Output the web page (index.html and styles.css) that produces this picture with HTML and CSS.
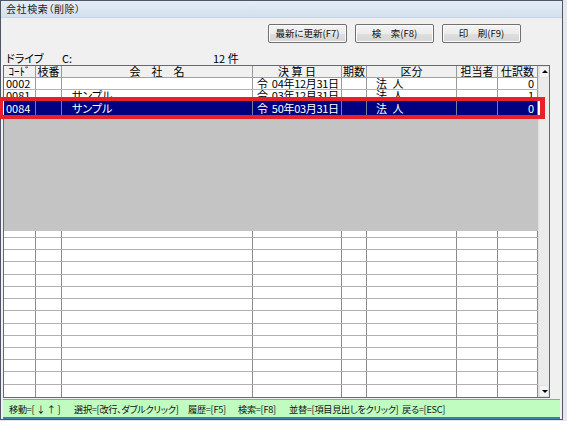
FILE: index.html
```html
<!DOCTYPE html>
<html lang="ja">
<head>
<meta charset="utf-8">
<title>会社検索（削除）</title>
<link rel="stylesheet" href="styles.css">
</head>
<body>
<div class="window">
  <div class="titlebar">会社検索（削除）</div>
  <div class="content">
    <div class="toolbar">
      <button class="btn">最新に更新(F7)</button>
      <button class="btn">検　索(F8)</button>
      <button class="btn">印　刷(F9)</button>
    </div>
    <div class="info">
      <span class="info-label">ドライブ</span>
      <span class="info-drive">C:</span>
      <span class="info-count">12 件</span>
    </div>
    <div class="table">
      <div class="grid">
        <div class="row head">
          <div class="c ctr">ｺｰﾄﾞ</div>
          <div class="c ctr">枝番</div>
          <div class="c ctr">会　社　名</div>
          <div class="c ctr">決 算 日</div>
          <div class="c ctr">期数</div>
          <div class="c ctr">区分</div>
          <div class="c ctr">担当者</div>
          <div class="c ctr">仕訳数</div>
        </div>
        <div class="row data">
          <div class="c code">0002</div>
          <div class="c"></div>
          <div class="c name"></div>
          <div class="c date">令 04年12月31日</div>
          <div class="c"></div>
          <div class="c kind">法 人</div>
          <div class="c"></div>
          <div class="c num">0</div>
        </div>
        <div class="row data">
          <div class="c code">0081</div>
          <div class="c"></div>
          <div class="c name">サンプル</div>
          <div class="c date">令 03年12月31日</div>
          <div class="c"></div>
          <div class="c kind">法 人</div>
          <div class="c"></div>
          <div class="c num">1</div>
        </div>
        <div class="filler"></div>
        <div class="row empty short"><div class="c"></div><div class="c"></div><div class="c"></div><div class="c"></div><div class="c"></div><div class="c"></div><div class="c"></div><div class="c"></div></div>
        <div class="row empty"><div class="c"></div><div class="c"></div><div class="c"></div><div class="c"></div><div class="c"></div><div class="c"></div><div class="c"></div><div class="c"></div></div>
        <div class="row empty"><div class="c"></div><div class="c"></div><div class="c"></div><div class="c"></div><div class="c"></div><div class="c"></div><div class="c"></div><div class="c"></div></div>
        <div class="row empty"><div class="c"></div><div class="c"></div><div class="c"></div><div class="c"></div><div class="c"></div><div class="c"></div><div class="c"></div><div class="c"></div></div>
        <div class="row empty"><div class="c"></div><div class="c"></div><div class="c"></div><div class="c"></div><div class="c"></div><div class="c"></div><div class="c"></div><div class="c"></div></div>
        <div class="row empty"><div class="c"></div><div class="c"></div><div class="c"></div><div class="c"></div><div class="c"></div><div class="c"></div><div class="c"></div><div class="c"></div></div>
        <div class="row empty"><div class="c"></div><div class="c"></div><div class="c"></div><div class="c"></div><div class="c"></div><div class="c"></div><div class="c"></div><div class="c"></div></div>
        <div class="row empty"><div class="c"></div><div class="c"></div><div class="c"></div><div class="c"></div><div class="c"></div><div class="c"></div><div class="c"></div><div class="c"></div></div>
        <div class="row empty"><div class="c"></div><div class="c"></div><div class="c"></div><div class="c"></div><div class="c"></div><div class="c"></div><div class="c"></div><div class="c"></div></div>
        <div class="row empty"><div class="c"></div><div class="c"></div><div class="c"></div><div class="c"></div><div class="c"></div><div class="c"></div><div class="c"></div><div class="c"></div></div>
        <div class="row empty"><div class="c"></div><div class="c"></div><div class="c"></div><div class="c"></div><div class="c"></div><div class="c"></div><div class="c"></div><div class="c"></div></div>
        <div class="row empty"><div class="c"></div><div class="c"></div><div class="c"></div><div class="c"></div><div class="c"></div><div class="c"></div><div class="c"></div><div class="c"></div></div>
        <div class="row empty"><div class="c"></div><div class="c"></div><div class="c"></div><div class="c"></div><div class="c"></div><div class="c"></div><div class="c"></div><div class="c"></div></div>
        <div class="row empty last"><div class="c"></div><div class="c"></div><div class="c"></div><div class="c"></div><div class="c"></div><div class="c"></div><div class="c"></div><div class="c"></div></div>
      </div>
      <div class="scrollbar">
        <div class="sb-btn up"></div>
        <div class="sb-track"></div>
        <div class="sb-btn down"></div>
      </div>
    </div>
    <div class="status">
      <span class="st st1">移動=[ ↓ ↑ ]</span>
      <span class="st st2">選択=[改行、ダブルクリック]</span>
      <span class="st st3">履歴=[F5]</span>
      <span class="st st4">検索=[F8]</span>
      <span class="st st5">並替=[項目見出しをクリック]</span>
      <span class="st">戻る=[ESC]</span>
    </div>
  </div>
  <div class="selected-overlay">
    <div class="row sel">
      <div class="c code">0084</div>
      <div class="c"></div>
      <div class="c name">サンプル</div>
      <div class="c date">令 50年03月31日</div>
      <div class="c"></div>
      <div class="c kind">法 人</div>
      <div class="c"></div>
      <div class="c num">0</div>
    </div>
  </div>
</div>
</body>
</html>
```
FILE: styles.css
```css
* { box-sizing: border-box; }
html, body { margin: 0; padding: 0; }
body {
  width: 567px;
  height: 421px;
  overflow: hidden;
  background: #e4e8ec;
  font-family: "Noto Sans CJK JP", sans-serif;
  font-feature-settings: "palt";
  color: #000;
}
.window {
  position: relative;
  width: 563px;
  height: 420px;
  border: 1px solid #4d5864;
  background: #f0f0f0;
  display: flex;
  flex-direction: column;
}
.titlebar {
  height: 17px;
  flex-shrink: 0;
  background: linear-gradient(#e4ecf7, #d4e0ee);
  border-bottom: 1px solid #c7d3e0;
  font-size: 10px;
  letter-spacing: 0.6px;
  line-height: 16px;
  padding-left: 5px;
  color: #1b1b1b;
  white-space: nowrap;
}
.content {
  flex: 1;
  display: flex;
  flex-direction: column;
  padding: 0 2px;
}
.toolbar {
  margin-top: 6px;
  display: flex;
  justify-content: flex-end;
  gap: 8px;
  padding-right: 39px;
}
.btn {
  width: 79px;
  height: 19px;
  padding: 0;
  border: 1px solid #707070;
  border-radius: 2px;
  background: linear-gradient(#f4f4f4 0%, #ececec 50%, #dedede 51%, #d6d6d6 100%);
  box-shadow: inset 0 0 0 1px #fcfcfc;
  font-family: "Noto Sans CJK JP", sans-serif;
  font-feature-settings: "palt";
  font-size: 9.5px;
  line-height: 17px;
  color: #111;
  white-space: nowrap;
}
.info {
  margin-top: 8px;
  height: 14px;
  display: flex;
  font-size: 11px;
  line-height: 14px;
  padding-left: 3px;
  white-space: nowrap;
}
.info-label { width: 56px; }
.info-drive { width: 151px; }
.table {
  width: 547px;
  height: 333px;
  border: 1px solid #646a70;
  display: flex;
  background: #ffffff;
}
.grid {
  width: 534px;
  display: flex;
  flex-direction: column;
  overflow: hidden;
}
.row {
  display: grid;
  grid-template-columns: 32px 26px 191px 89px 25px 90px 41px 40px;
  flex-shrink: 0;
  font-size: 11px;
  line-height: 11px;
  white-space: nowrap;
}
.c {
  border-right: 1px solid #9a9a9a;
  overflow: hidden;
  display: flex;
  align-items: center;
}
.ctr { justify-content: center; }
.code { padding-left: 2px; }
.name { padding-left: 10px; }
.date { padding-left: 4px; letter-spacing: -0.3px; word-spacing: 2px; }
.kind { padding-left: 9px; word-spacing: 3px; }
.num { justify-content: flex-end; padding-right: 3px; }
.head {
  height: 12px;
  background: #f0f0f0;
  border-bottom: 1px solid #a0a0a0;
}
.data {
  height: 12px;
  background: #fff;
  border-bottom: 1px solid #b4b4b4;
}
.filler {
  height: 129px;
  flex-shrink: 0;
  background: #c4c4c4;
}
.empty {
  height: 12.23px;
  background: #fff;
  border-bottom: 1px solid #b0b0b0;
}
.empty .c { border-right-color: #8c8c8c; }
.empty.short { height: 7px; }
.empty.last { border-bottom: none; }
.scrollbar {
  width: 11px;
  display: flex;
  flex-direction: column;
  background: #ebebeb;
  border-left: 1px solid #e0e0e0;
}
.sb-track { flex: 1; }
.sb-btn {
  height: 12px;
  position: relative;
  background: #f4f4f4;
  border: 1px solid #e2e2e2;
}
.sb-btn::after {
  content: "";
  position: absolute;
  left: 2px;
  width: 0;
  height: 0;
  border-left: 3px solid transparent;
  border-right: 3px solid transparent;
}
.sb-btn.up::after { top: 3px; border-bottom: 3px solid #000; }
.sb-btn.down::after { top: 4px; border-top: 3px solid #000; }
.status {
  margin-top: 1px;
  height: 20px;
  background: #c0fbc0;
  border-top: 1px solid #9aa09a;
  border-bottom: 2px solid #3b7fae;
  display: flex;
  align-items: center;
  padding-left: 6px;
  font-size: 9.2px;
  letter-spacing: -0.3px;
  white-space: nowrap;
  color: #111;
}
.st { flex-shrink: 0; }
.st1 { width: 65px; }
.st2 { width: 114px; }
.st3 { width: 50px; }
.st4 { width: 51px; }
.st5 { width: 113px; }
.selected-overlay {
  position: absolute;
  top: 96px;
  left: -1px;
  width: 545px;
  height: 22px;
  border-style: solid;
  border-color: #e8202a;
  border-width: 4px 5px 4px 3px;
  background: #ffffff;
  padding-left: 1px;
}
.sel {
  width: 534px;
  height: 14px;
  background: #000080;
  color: #ffffff;
}
.sel .c { border-right-color: #7a7a9a; }
```
